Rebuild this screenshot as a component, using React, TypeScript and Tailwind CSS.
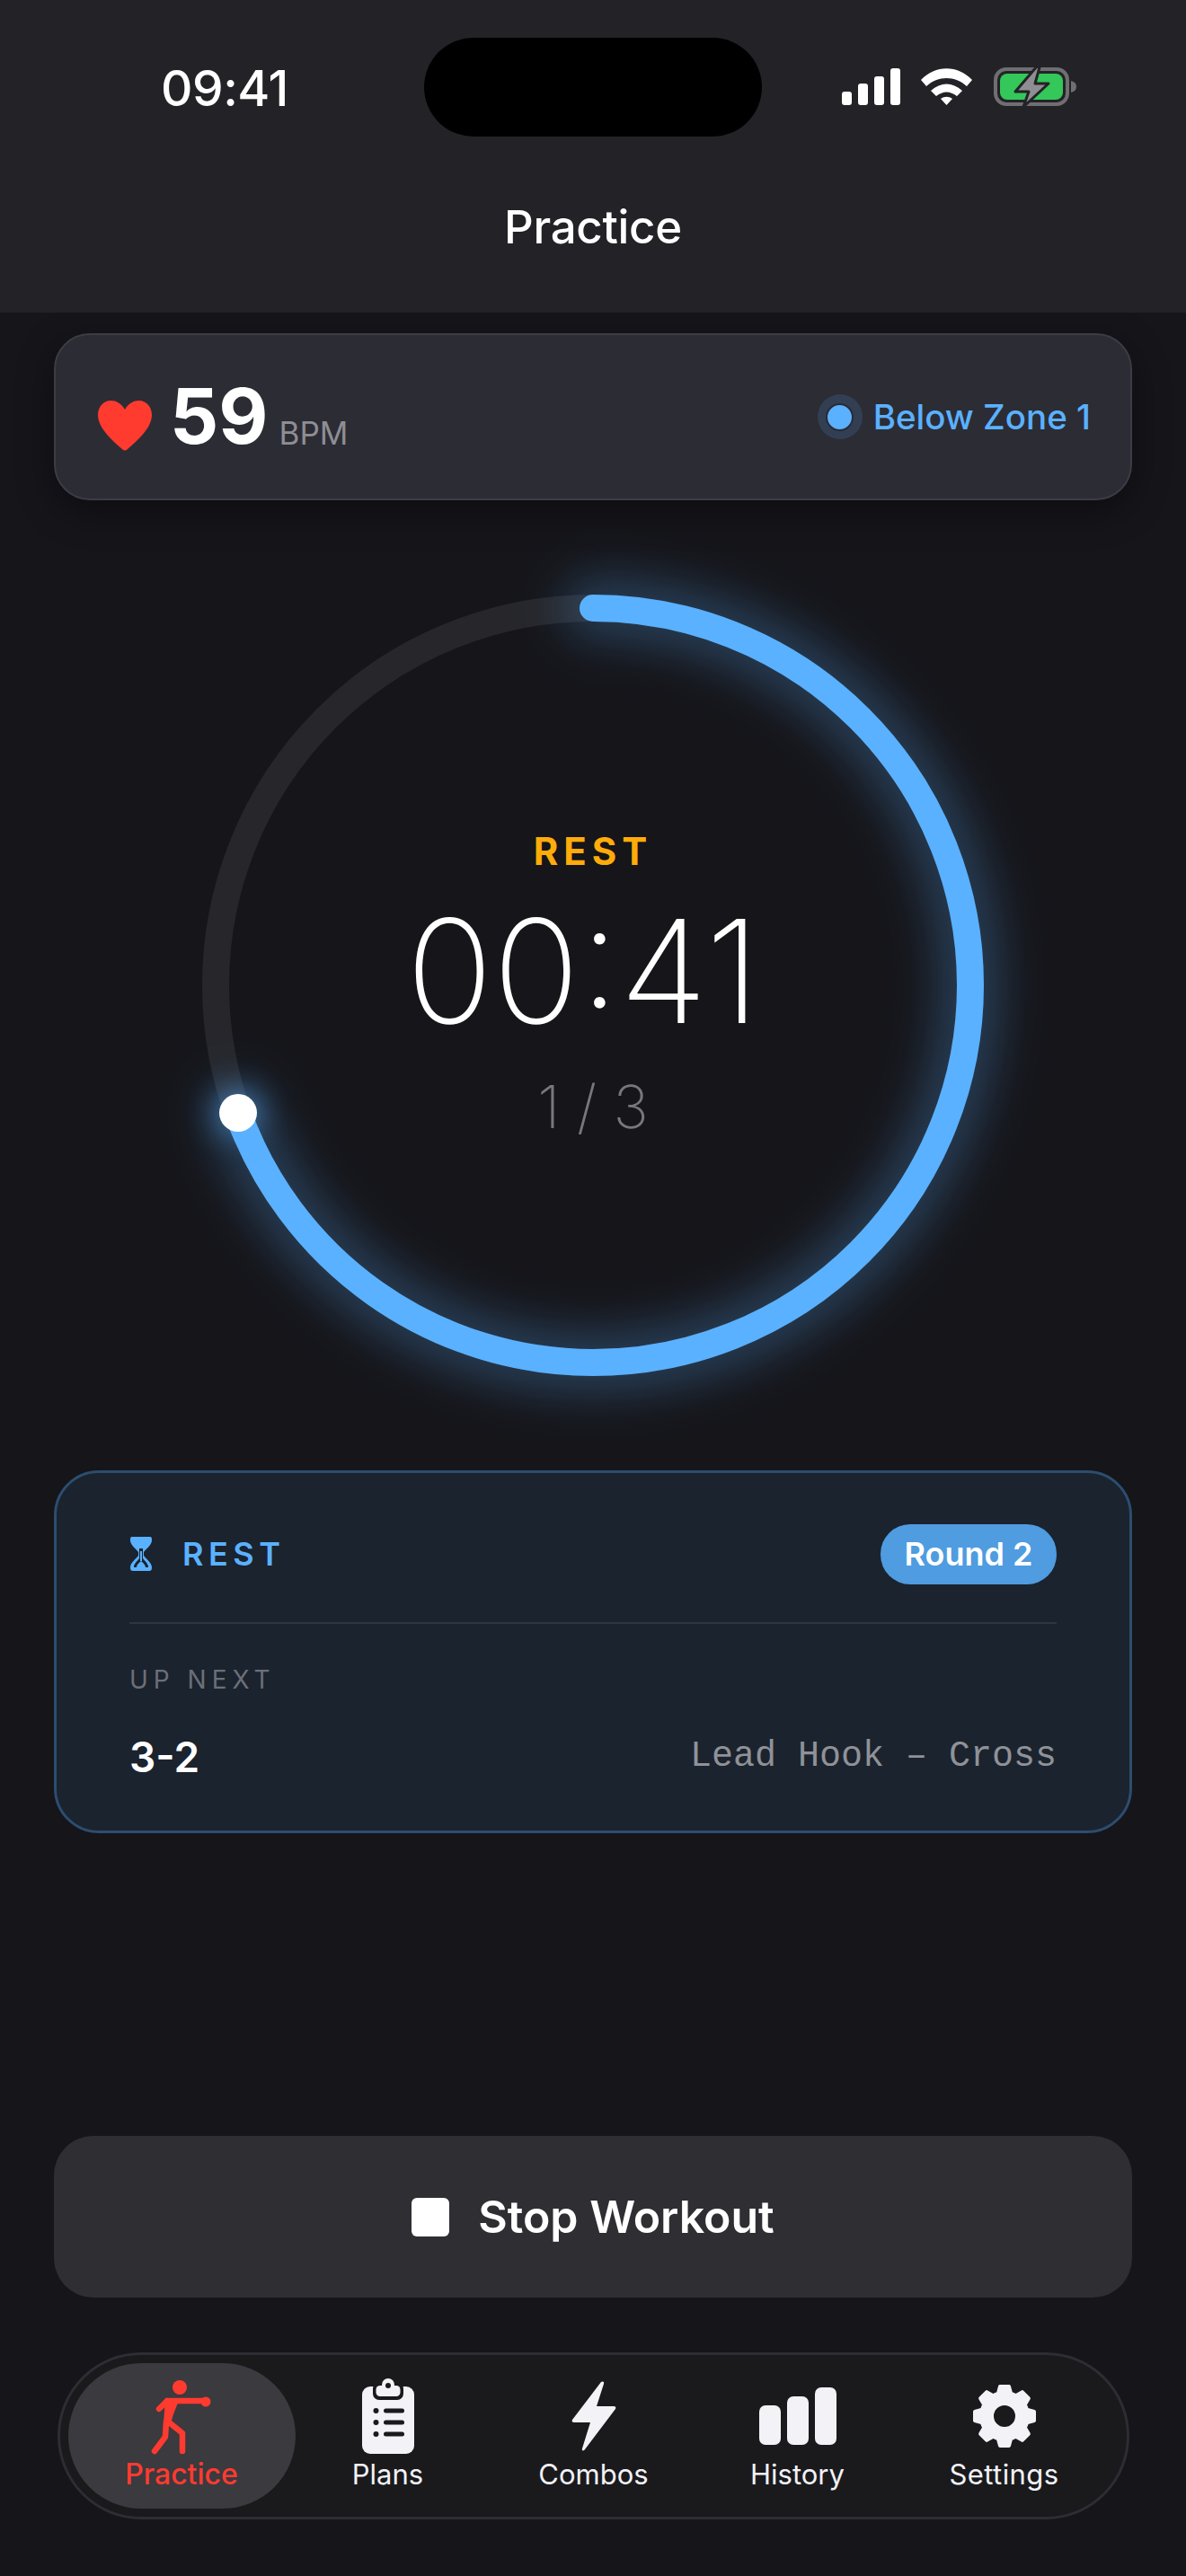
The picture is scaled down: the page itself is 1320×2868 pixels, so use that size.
import React from "react";

const sans = "font-['Inter','Liberation_Sans',sans-serif]";

const PunchIcon = () => (
  <svg width="68" height="84" viewBox="0 0 68 84" fill="none">
    <circle cx="32" cy="8" r="8" fill="#ff3b30" />
    <path d="M18 23H60M18 23L9 32M17 46L16 63L4 79M19 46L35 59V79" stroke="#ff3b30" strokeWidth="6.5" strokeLinecap="round" strokeLinejoin="round" />
    <path d="M16 20H32L25 38L22 48H14L15 34Z" fill="#ff3b30" />
    <circle cx="61" cy="24" r="5.5" fill="#ff3b30" />
  </svg>
);

const PlansIcon = () => (
  <svg width="58" height="84" viewBox="0 0 58 84">
    <rect x="0" y="9" width="58" height="75" rx="9" fill="#f2f2f7" />
    <rect x="12" y="4" width="34" height="20" rx="7" fill="#1a1a1d" />
    <rect x="15.5" y="8" width="27" height="12" rx="4.5" fill="#f2f2f7" />
    <circle cx="29" cy="7" r="7" fill="#f2f2f7" />
    <circle cx="29" cy="8" r="3" fill="#1a1a1d" />
    <g fill="#1a1a1d">
      <circle cx="15.5" cy="36" r="3" />
      <circle cx="15.5" cy="49" r="3" />
      <circle cx="15.5" cy="62" r="3" />
      <rect x="24" y="33.5" width="23" height="5" rx="2.5" />
      <rect x="24" y="46.5" width="23" height="5" rx="2.5" />
      <rect x="24" y="59.5" width="23" height="5" rx="2.5" />
    </g>
  </svg>
);

const BoltIcon = () => (
  <svg width="50" height="78" viewBox="0 0 50 78">
    <path d="M33 1L1 43C0 45 1 46 3 46H21L12 75C11 78 14 78 15 76L49 31C50 29 49 28 47 28H28L36 3C37 0 34 0 33 1Z" fill="#f2f2f7" />
  </svg>
);

const HistoryIcon = () => (
  <div className="flex items-end gap-[7px] h-[64px]">
    <div className="w-[24px] h-[44px] rounded-[7px] bg-[#f2f2f7]" />
    <div className="w-[24px] h-[54px] rounded-[7px] bg-[#f2f2f7]" />
    <div className="w-[24px] h-[64px] rounded-[7px] bg-[#f2f2f7]" />
  </div>
);

const GearIcon = () => (
  <svg width="72" height="72" viewBox="0 0 72 72" fill="none">
    <circle cx="36" cy="36" r="20" stroke="#f2f2f7" strokeWidth="16" />
    {[0, 45, 90, 135, 180, 225, 270, 315].map((a) => (
      <path
        key={a}
        d="M31 3H41L44 14H28Z"
        fill="#f2f2f7"
        stroke="#f2f2f7"
        strokeWidth="4"
        strokeLinejoin="round"
        transform={`rotate(${a} 36 36)`}
      />
    ))}
  </svg>
);

const tabs = [
  { label: "Plans", icon: <PlansIcon />, cls: "-ml-[11px]" },
  { label: "Combos", icon: <BoltIcon />, cls: "ml-[1px]" },
  { label: "History", icon: <HistoryIcon />, cls: "-ml-[1px]" },
  { label: "Settings", icon: <GearIcon />, cls: "ml-[2px] tracking-[0.4px]" },
];

export default function App() {
  const r = 420;
  const circ = 2 * Math.PI * r;
  const arc = `${circ * 0.696} ${circ}`;

  return (
    <div className={`relative w-[1320px] h-[2868px] bg-[#15151a] text-white overflow-hidden ${sans}`}>
      {/* header */}
      <div className="relative h-[348px] bg-[#232327]">
        <span className="absolute left-[179px] top-[69px] text-[55px] leading-[58px] font-medium tracking-[-0.5px]">09:41</span>
        <div className="absolute left-[472px] top-[42px] w-[376px] h-[110px] rounded-[55px] bg-black" />
        <div className="absolute left-[937px] top-[76px] flex items-end gap-[7px]">
          <div className="w-[11px] h-[15px] rounded-[3px] bg-white" />
          <div className="w-[11px] h-[24px] rounded-[3px] bg-white" />
          <div className="w-[11px] h-[32px] rounded-[3px] bg-white" />
          <div className="w-[11px] h-[41px] rounded-[3px] bg-white" />
        </div>
        <svg className="absolute left-[1025px] top-[76px]" width="58" height="42" viewBox="0 0 58 42">
          <path d="M0 13C16 -4 41 -4 57 13L51 20C38 8 19 8 6 20Z" fill="#fff" />
          <path d="M11 25C22 15 35 15 46 25L40 31C32 25 25 25 17 31Z" fill="#fff" />
          <path d="M22 34C26 31 31 31 35 34L28.5 41Z" fill="#fff" />
        </svg>
        <svg className="absolute left-[1106px] top-[72px]" width="92" height="50" viewBox="0 0 92 50">
          <rect x="2" y="5" width="80" height="39" rx="12" fill="none" stroke="#6e6e73" strokeWidth="4" />
          <rect x="7" y="10" width="70" height="29" rx="8" fill="#34c759" />
          <path d="M86 18C90 19 92 21 92 24.5C92 28 90 30 86 31Z" fill="#6e6e73" />
          <path d="M48 2L24 30H39L33 47L61 21H46L51 3Z" fill="#8e8e93" stroke="#232327" strokeWidth="3" strokeLinejoin="round" />
        </svg>
        <h1 className="absolute inset-x-0 top-[227px] text-center text-[51px] leading-[52px] font-medium tracking-[-0.3px]">Practice</h1>
      </div>

      <div className="flex flex-col items-center">
        {/* heart rate */}
        <div className="mt-[23px] w-[1200px] h-[186px] rounded-[40px] border-2 border-[#3c3c44] bg-[#2c2c35] shadow-[0_12px_40px_rgba(0,0,0,0.35)] flex items-center justify-between pl-[47px] pr-[44px]">
          <div className="flex items-center">
            <svg width="60" height="56" viewBox="0 0 60 56" className="mt-[20px]">
              <path d="M30 10C26 3 20 0 14.5 0C6 0 0 7 0 16C0 31 17 45 27 54C29 56 31 56 33 54C43 45 60 31 60 16C60 7 54 0 45.5 0C40 0 34 3 30 10Z" fill="#ff3b30" />
            </svg>
            <span className="ml-[20px] text-[85px] leading-[90px] font-bold">59</span>
            <span className="ml-[12px] mt-[36px] text-[35px] leading-[40px] text-[#8e8e93]">BPM</span>
          </div>
          <div className="flex items-center">
            <div className="w-[50px] h-[50px] rounded-full bg-[#5ab1ff]/15 flex items-center justify-center">
              <div className="w-[31px] h-[31px] rounded-full border-2 border-[#2a2a33] bg-[#5ab1ff]" />
            </div>
            <span className="ml-[12px] text-[38.5px] leading-[44px] font-medium text-[#5ab1ff]">Below Zone 1</span>
          </div>
        </div>

        {/* timer ring */}
        <div className="relative mt-[105px] w-[870px] h-[870px]">
          <svg className="absolute -inset-[80px]" width="1030" height="1030" viewBox="0 0 1030 1030" fill="none">
            <circle cx="515" cy="515" r={r} stroke="#26262b" strokeWidth="30" />
            <circle cx="515" cy="515" r={r} stroke="#5ab1ff" strokeOpacity="0.28" strokeWidth="66" strokeLinecap="round" strokeDasharray={arc} transform="rotate(-90 515 515)" className="blur-[26px]" />
            <circle cx="515" cy="515" r={r} stroke="#5ab1ff" strokeWidth="30" strokeLinecap="round" strokeDasharray={arc} transform="rotate(-90 515 515)" />
          </svg>
          <div className="absolute left-[19px] top-[556px] w-[42px] h-[42px] rounded-full bg-white shadow-[0_0_36px_rgba(90,177,255,0.8)]" />
          <div className="absolute inset-0 flex flex-col items-center">
            <span className="mt-[261px] text-[42px] leading-[50px] font-bold tracking-[6px] text-[#ffac0a]">REST</span>
            <span className="mt-[28px] mr-[22px] text-[160px] leading-[160px] font-extralight">00:41</span>
            <span className="mt-[29px] text-[66px] leading-[84px] font-extralight text-[#77777c]">1 / 3</span>
          </div>
        </div>

        {/* up next card */}
        <div className="mt-[105px] w-[1200px] h-[404px] rounded-[50px] border-[3px] border-[#2c4d6f] bg-[#1b232e] px-[81px]">
          <div className="flex items-center justify-between h-[168px] pt-[14px] border-b-2 border-[#30363f]">
            <div className="flex items-center">
              <svg width="26" height="40" viewBox="0 0 26 40" fill="none">
                <path d="M3 1H23C25 1 25 3 25 5C25 10 19 14 16 18V22C19 26 25 30 25 35C25 38 24 39 22 39H4C2 39 1 38 1 35C1 30 7 26 10 22V18C7 14 1 10 1 5C1 3 1 1 3 1Z" fill="#5ab1ff" />
                <path d="M11 14H15V25C18 29 21 31 21 35H5C5 31 8 29 11 25Z" fill="#1b232e" />
                <path d="M13 28C15 30 18 32 18 35H8C8 32 11 30 13 28Z" fill="#5ab1ff" />
                <rect x="12" y="17" width="2" height="11" fill="#5ab1ff" />
              </svg>
              <span className="ml-[33px] text-[36px] leading-[44px] font-semibold tracking-[5.5px] text-[#5ab1ff]">REST</span>
            </div>
            <div className="w-[196px] h-[67px] rounded-[33px] bg-[#4f9ce0] flex items-center justify-center text-[36px] font-semibold">Round 2</div>
          </div>
          <div className="mt-[44px] text-[28px] leading-[36px] tracking-[6px] text-[#6b6f78]">UP NEXT</div>
          <div className="mt-[43px] flex items-center justify-between">
            <span className="text-[46px] leading-[50px] font-semibold">3-2</span>
            <span className="text-[40px] leading-[50px] text-[#8f9298] font-['Liberation_Mono',monospace]">Lead Hook – Cross</span>
          </div>
        </div>

        {/* stop */}
        <button className="mt-[337px] w-[1200px] h-[180px] rounded-[44px] bg-[#2e2e33] flex items-center justify-center">
          <div className="w-[42px] h-[43px] rounded-[6px] bg-white" />
          <span className="ml-[32px] text-[50px] leading-[60px] font-semibold">Stop Workout</span>
        </button>

        {/* tab bar */}
        <div className="mt-[61px] w-[1193px] h-[186px] rounded-[93px] border-[3px] border-[#2d2d33] bg-[#1a1a1d] flex items-center pl-[9px]">
          <div className="w-[253px] h-[162px] rounded-[81px] bg-[#3a3a3f] flex flex-col items-center">
            <div className="mt-[19px] h-[87px]"><PunchIcon /></div>
            <span className="text-[32px] leading-[36px] font-medium text-[#ff3b30]">Practice</span>
          </div>
          {tabs.map((t) => (
            <div key={t.label} className={`w-[228px] h-[162px] flex flex-col items-center ${t.cls}`}>
              <div className="h-[106px] pt-[12px] flex items-center justify-center">{t.icon}</div>
              <span className="text-[31px] leading-[36px] font-normal text-[#f2f2f7]">{t.label}</span>
            </div>
          ))}
        </div>
      </div>
    </div>
  );
}
